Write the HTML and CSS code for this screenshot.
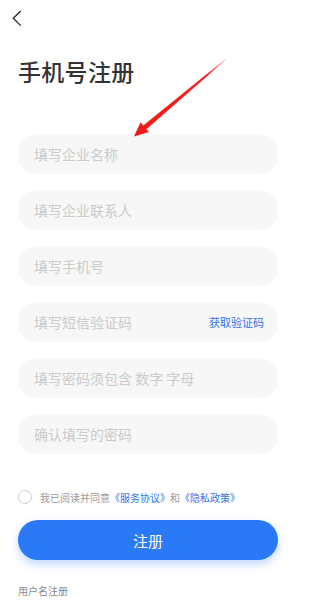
FILE: index.html
```html
<!DOCTYPE html>
<html>
<head>
<meta charset="utf-8">
<link rel="stylesheet" href="styles.css">
</head>
<body>
<div class="page">
  <div class="nav">
    <svg class="back" width="12" height="18" viewBox="0 0 12 18"><path d="M8.7 2 L1.3 9.3 L8.7 16.6" fill="none" stroke="#222" stroke-width="1.3"/></svg>
  </div>
  <h1 class="title">手机号注册</h1>
  <div class="form">
    <div class="field"><span class="ph">填写企业名称</span></div>
    <div class="field"><span class="ph">填写企业联系人</span></div>
    <div class="field"><span class="ph">填写手机号</span></div>
    <div class="field"><span class="ph">填写短信验证码</span><span class="code">获取验证码</span></div>
    <div class="field"><span class="ph">填写密码须包含 数字 字母</span></div>
    <div class="field"><span class="ph">确认填写的密码</span></div>
  </div>
  <div class="agree">
    <span class="radio"></span>
    <span class="agree-text">我已阅读并同意<span class="link">《服务协议》</span>和<span class="link">《隐私政策》</span></span>
  </div>
  <div class="btn">注册</div>
  <div class="alt">用户名注册</div>
  <svg class="arrow" width="295" height="160" viewBox="0 0 295 160">
    <defs>
      <linearGradient id="ag" x1="226" y1="59" x2="134" y2="136" gradientUnits="userSpaceOnUse">
        <stop offset="0" stop-color="#ff3b3b" stop-opacity="0.2"/>
        <stop offset="0.2" stop-color="#f42222"/>
        <stop offset="1" stop-color="#f21a1a"/>
      </linearGradient>
    </defs>
    <polygon points="226.3,59.4 146.4,129.2 149,132 134,136.5 140.6,122.2 143.3,125.4 225.6,58.7" fill="url(#ag)"/>
  </svg>
</div>
</body>
</html>
```

FILE: styles.css
```css
html, body {
  margin: 0;
  padding: 0;
  background: #ffffff;
}
body {
  font-family: "Noto Sans CJK SC", "Noto Sans", sans-serif;
  color: #333;
}
.page {
  position: relative;
  width: 295px;
  height: 612px;
  overflow: hidden;
}
.nav {
  height: 36px;
  display: flex;
  align-items: flex-start;
  padding: 9px 0 0 12px;
  box-sizing: border-box;
}
.back {
  display: block;
}
.title {
  margin: 18px 0 0 18px;
  font-size: 23px;
  line-height: 34px;
  font-weight: 500;
  color: #333;
  letter-spacing: 0.3px;
}
.form {
  margin: 46px 17px 0 18px;
  display: flex;
  flex-direction: column;
  gap: 16px;
}
.field {
  height: 40px;
  border-radius: 20px;
  background: #f7f7f7;
  display: flex;
  align-items: center;
  justify-content: space-between;
  padding: 0 14px 0 16px;
}
.ph {
  font-size: 14px;
  color: #cbcbcb;
}
.code {
  font-size: 11px;
  color: #2f74ef;
}
.agree {
  display: flex;
  align-items: center;
  margin: 35px 0 0 18px;
  height: 16px;
}
.radio {
  width: 12px;
  height: 12px;
  border: 1.5px solid #cfcfcf;
  border-radius: 50%;
  flex: none;
}
.agree-text {
  margin-left: 8px;
  font-size: 10px;
  color: #9a9a9a;
  white-space: nowrap;
}
.link {
  color: #2f74ef;
}
.btn {
  margin: 15px 17px 0 18px;
  height: 40px;
  border-radius: 20px;
  background: #2a7af8;
  box-shadow: 0 4px 10px rgba(42, 122, 248, 0.3);
  color: #fff;
  font-size: 15px;
  display: flex;
  align-items: center;
  justify-content: center;
}
.alt {
  margin: 24px 0 0 18px;
  font-size: 10px;
  color: #8a8a8a;
  line-height: 14px;
}
.arrow {
  position: absolute;
  left: 0;
  top: 0;
}
```
